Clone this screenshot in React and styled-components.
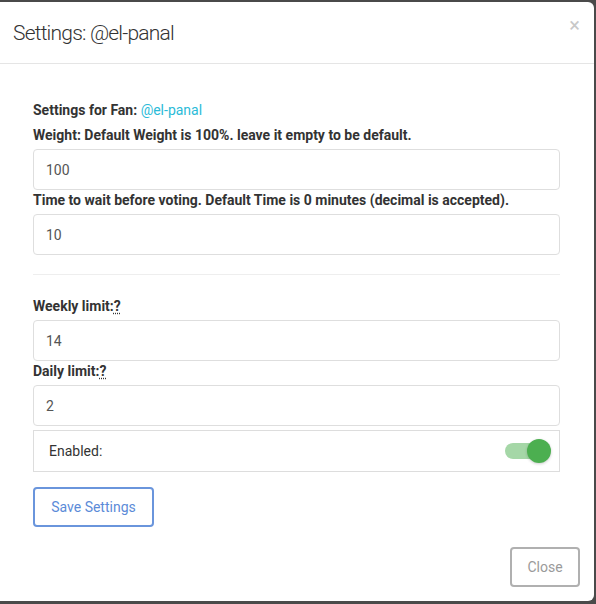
import React from "react";
import styled, { createGlobalStyle } from "styled-components";

const GlobalStyle = createGlobalStyle`
  html, body {
    margin: 0;
    padding: 0;
    background: #4a4a4a;
    font-family: Roboto, "Liberation Sans", sans-serif;
  }
  * { box-sizing: border-box; }
`;

const Backdrop = styled.div({
  width: "596px",
  height: "604px",
  paddingTop: "2px",
  overflow: "hidden",
});

const Modal = styled.div({
  width: "594px",
  height: "599px",
  background: "#fff",
  borderRadius: "0 6px 6px 0",
  display: "flex",
  flexDirection: "column",
});

const Header = styled.div({
  height: "62px",
  borderBottom: "1px solid #e5e5e5",
  display: "flex",
  alignItems: "center",
  justifyContent: "space-between",
  padding: "0 14px 0 13px",
});

const Title = styled.h4({
  margin: 0,
  fontSize: "21px",
  fontWeight: 300,
  letterSpacing: "-0.8px",
  color: "#333",
  marginTop: "1px",
});

const CloseX = styled.span({
  fontSize: "20px",
  color: "#c8c8c8",
  alignSelf: "flex-start",
  marginTop: "13px",
  lineHeight: 1,
});

const Body = styled.div({
  flex: 1,
  padding: "36px 34px 0 33px",
  display: "flex",
  flexDirection: "column",
});

const Label = styled.label({
  display: "block",
  fontSize: "14px",
  lineHeight: "20px",
  fontWeight: 700,
  color: "#333",
  marginBottom: (p) => (p.$gap ? p.$gap : "4px"),
});

const Fan = styled.span({
  fontWeight: 400,
  color: "#2bbbd8",
});

const Hint = styled.abbr({
  textDecoration: "underline dotted",
  textUnderlineOffset: "2px",
  cursor: "help",
});

const Input = styled.input({
  display: "block",
  width: "100%",
  height: "41px",
  border: "1px solid #dedede",
  borderRadius: "4px",
  padding: "0 12px",
  fontSize: "14px",
  fontFamily: "inherit",
  color: "#555",
  outline: "none",
});

const Divider = styled.hr({
  border: 0,
  borderTop: "1px solid #eee",
  margin: "19px 0 21px",
  width: "100%",
});

const ToggleRow = styled.div({
  marginTop: "4px",
  height: "42px",
  border: "1px solid #ddd",
  display: "flex",
  alignItems: "center",
  justifyContent: "space-between",
  padding: "0 10px 0 15px",
  fontSize: "14px",
  color: "#333",
});

const Track = styled.div({
  position: "relative",
  width: "42px",
  height: "16px",
  borderRadius: "8px",
  background: "rgba(76, 175, 80, 0.5)",
  marginRight: "2px",
});

const Knob = styled.div({
  position: "absolute",
  right: "-4px",
  top: "-4px",
  width: "24px",
  height: "24px",
  borderRadius: "50%",
  background: "#4caf50",
  boxShadow: "0 1px 3px rgba(0,0,0,0.2)",
});

const OutlineButton = styled.button({
  fontFamily: "inherit",
  fontSize: "14px",
  background: "#fff",
  height: "40px",
  borderRadius: "4px",
  cursor: "pointer",
  border: (p) => `2px solid ${p.$border}`,
  color: (p) => p.$color,
  width: (p) => p.$width,
});

const SaveButton = styled(OutlineButton)({
  marginTop: "15px",
});

const Footer = styled.div({
  display: "flex",
  justifyContent: "flex-end",
  padding: "0 14px 14px",
});

export default function App() {
  return (
    <>
      <GlobalStyle />
      <Backdrop>
        <Modal>
          <Header>
            <Title>Settings: @el-panal</Title>
            <CloseX>×</CloseX>
          </Header>
          <Body>
            <Label $gap="5px">
              Settings for Fan: <Fan>@el-panal</Fan>
            </Label>
            <Label>Weight: Default Weight is 100%. leave it empty to be default.</Label>
            <Input defaultValue="100" />
            <Label>Time to wait before voting. Default Time is 0 minutes (decimal is accepted).</Label>
            <Input defaultValue="10" />
            <Divider />
            <Label>
              Weekly limit:<Hint title="Maximum votes per week">?</Hint>
            </Label>
            <Input defaultValue="14" />
            <Label>
              Daily limit:<Hint title="Maximum votes per day">?</Hint>
            </Label>
            <Input defaultValue="2" />
            <ToggleRow>
              <span>Enabled:</span>
              <Track>
                <Knob />
              </Track>
            </ToggleRow>
            <div>
              <SaveButton $border="#6a95dc" $color="#5b8bd8" $width="121px">
                Save Settings
              </SaveButton>
            </div>
          </Body>
          <Footer>
            <OutlineButton $border="#b0b0b0" $color="#9a9a9a" $width="70px">
              Close
            </OutlineButton>
          </Footer>
        </Modal>
      </Backdrop>
    </>
  );
}
